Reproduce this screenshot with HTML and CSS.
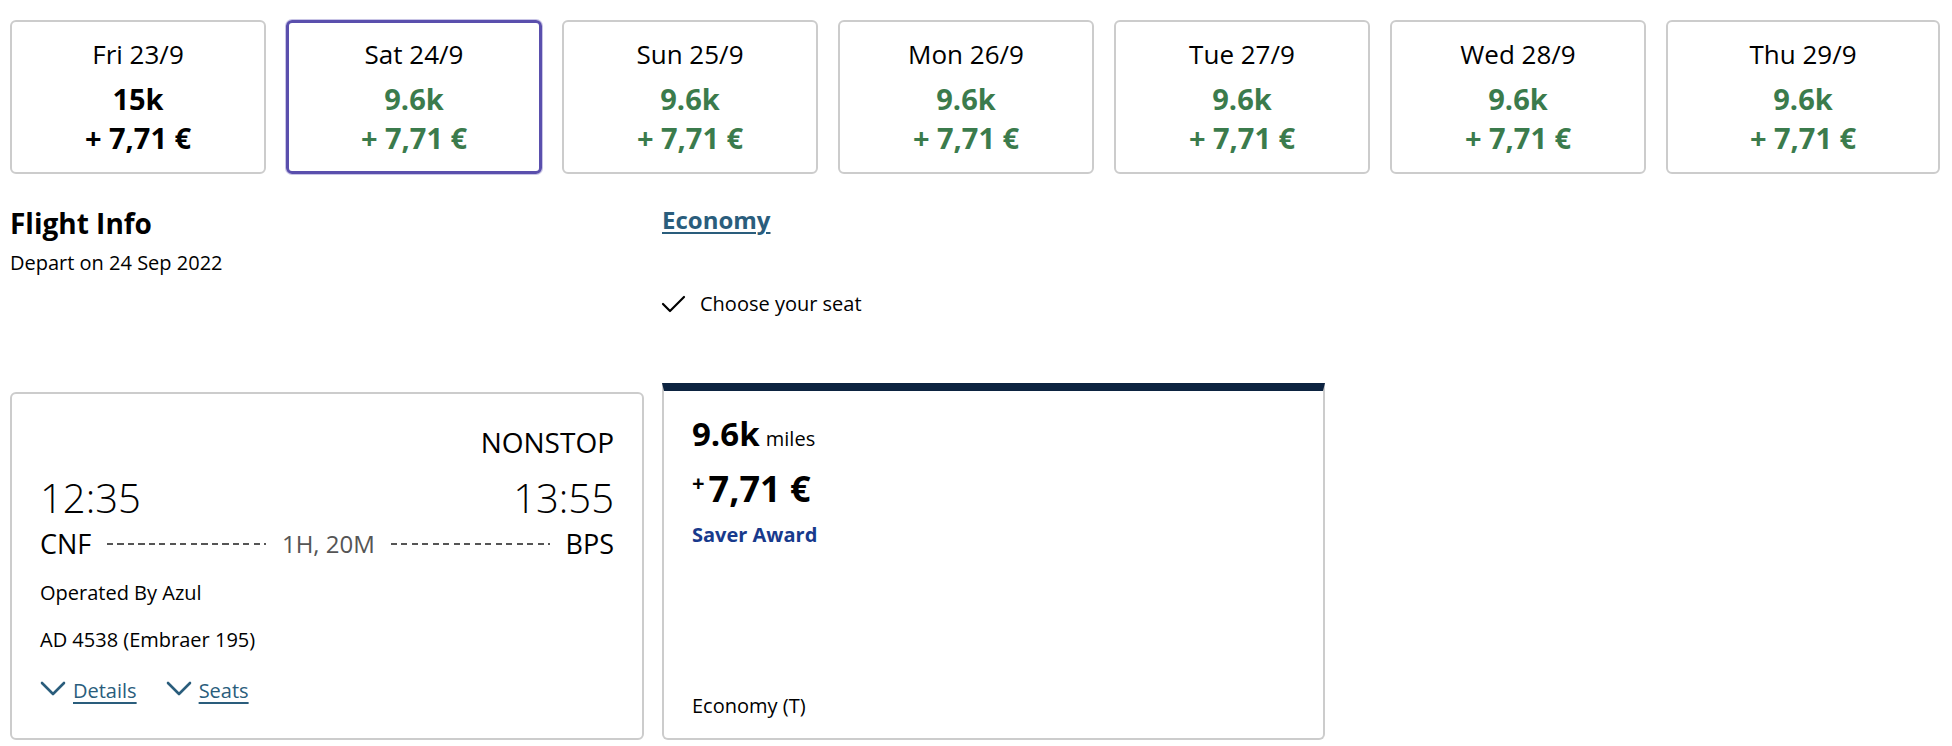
FILE: index.html
```html
<!DOCTYPE html>
<html lang="en">
<head>
<meta charset="utf-8">
<title>Flight selection</title>
<link rel="stylesheet" href="styles.css">
</head>
<body>
<div class="page">
  <div class="dates">
    <div class="date-card">
      <div class="date">Fri 23/9</div>
      <div class="price">15k</div>
      <div class="price">+ 7,71 €</div>
    </div>
    <div class="date-card selected">
      <div class="date">Sat 24/9</div>
      <div class="price green">9.6k</div>
      <div class="price green">+ 7,71 €</div>
    </div>
    <div class="date-card">
      <div class="date">Sun 25/9</div>
      <div class="price green">9.6k</div>
      <div class="price green">+ 7,71 €</div>
    </div>
    <div class="date-card">
      <div class="date">Mon 26/9</div>
      <div class="price green">9.6k</div>
      <div class="price green">+ 7,71 €</div>
    </div>
    <div class="date-card">
      <div class="date">Tue 27/9</div>
      <div class="price green">9.6k</div>
      <div class="price green">+ 7,71 €</div>
    </div>
    <div class="date-card">
      <div class="date">Wed 28/9</div>
      <div class="price green">9.6k</div>
      <div class="price green">+ 7,71 €</div>
    </div>
    <div class="date-card">
      <div class="date">Thu 29/9</div>
      <div class="price green">9.6k</div>
      <div class="price green">+ 7,71 €</div>
    </div>
  </div>

  <div class="main">
    <div class="left-head">
      <h2 class="title">Flight Info</h2>
      <div class="depart">Depart on 24 Sep 2022</div>
    </div>
    <div class="right-head">
      <a class="cabin" href="#">Economy</a>
      <div class="feature">
        <svg class="check" width="26" height="20" viewBox="0 0 26 20"><path d="M2 10 L9 17 L23 3" fill="none" stroke="#000" stroke-width="2.2" stroke-linecap="round" stroke-linejoin="round"/></svg>
        <span>Choose your seat</span>
      </div>
    </div>

    <div class="flight-card">
      <div class="stops">NONSTOP</div>
      <div class="times">
        <span>12:35</span>
        <span>13:55</span>
      </div>
      <div class="route">
        <span class="code">CNF</span>
        <span class="dash"></span>
        <span class="duration">1H, 20M</span>
        <span class="dash"></span>
        <span class="code">BPS</span>
      </div>
      <div class="info">Operated By Azul</div>
      <div class="info second">AD 4538 (Embraer 195)</div>
      <div class="links">
        <a class="toggle" href="#">
          <svg width="26" height="16" viewBox="0 0 26 16"><path d="M2 2 L13 13 L24 2" fill="none" stroke="#2a5d7c" stroke-width="2.6" stroke-linecap="round" stroke-linejoin="round"/></svg>
          <span>Details</span>
        </a>
        <a class="toggle" href="#">
          <svg width="26" height="16" viewBox="0 0 26 16"><path d="M2 2 L13 13 L24 2" fill="none" stroke="#2a5d7c" stroke-width="2.6" stroke-linecap="round" stroke-linejoin="round"/></svg>
          <span>Seats</span>
        </a>
      </div>
    </div>

    <div class="fare-card">
      <div class="miles"><span class="miles-num">9.6k</span> <span class="miles-unit">miles</span></div>
      <div class="tax"><sup class="plus">+</sup>7,71 €</div>
      <div class="award">Saver Award</div>
      <div class="fare-class">Economy (T)</div>
    </div>
  </div>
</div>
</body>
</html>
```
FILE: styles.css
```css
* { box-sizing: border-box; }

html, body {
  margin: 0;
  padding: 0;
  background: #ffffff;
}

body {
  font-family: "Open Sans", "Noto Sans", "Liberation Sans", sans-serif;
  color: #000000;
}

.page {
  padding: 20px 12px 0 10px;
}

.dates {
  display: grid;
  grid-template-columns: repeat(6, 256px) 1fr;
  column-gap: 20px;
}

.date-card {
  height: 154px;
  border: 2px solid #cccccc;
  border-radius: 6px;
  text-align: center;
  padding-top: 15px;
}

.date-card.selected {
  border: 3px solid #5a4fad;
  box-shadow: 0 0 0 1px #c9c5e6;
  padding-top: 14px;
}

.date {
  font-size: 26px;
  line-height: 34px;
  margin-bottom: 8px;
}

.price {
  font-size: 29px;
  font-weight: 700;
  line-height: 39px;
}

.price.green { color: #3b7b4c; }

.main {
  margin-top: 30px;
  display: grid;
  grid-template-columns: 634px 663px;
  column-gap: 18px;
  grid-template-rows: 179px auto;
}

.title {
  margin: 0;
  font-size: 28px;
  font-weight: 700;
  line-height: 38px;
}

.depart {
  margin-top: 8px;
  font-size: 20px;
  line-height: 26px;
}

.cabin {
  display: inline-block;
  font-size: 24px;
  font-weight: 700;
  line-height: 32px;
  color: #2a5d7c;
  text-decoration: underline;
  text-underline-offset: 3px;
  text-decoration-thickness: 2px;
}

.feature {
  margin-top: 55px;
  display: flex;
  align-items: center;
  gap: 13px;
  font-size: 20px;
  line-height: 26px;
}

.check { display: block; margin-left: -1px; }

.flight-card {
  align-self: end;
  height: 348px;
  border: 2px solid #cccccc;
  border-radius: 6px;
  padding: 30px 28px 0;
}

.stops {
  text-align: right;
  font-size: 28px;
  line-height: 36px;
}

.times {
  margin-top: 13px;
  display: flex;
  justify-content: space-between;
  font-size: 40px;
  font-weight: 300;
  line-height: 50px;
}

.route {
  margin-top: 3px;
  display: flex;
  align-items: center;
  gap: 16px;
  font-size: 27px;
  line-height: 36px;
}

.dash {
  flex: 1;
  height: 2px;
  background: repeating-linear-gradient(90deg, #555555 0 6px, transparent 6px 10.5px);
}

.duration {
  font-size: 24px;
  color: #555555;
}

.info {
  margin-top: 17px;
  font-size: 20px;
  line-height: 28px;
}

.info.second { margin-top: 19px; }

.links {
  margin-top: 23px;
  display: flex;
  gap: 29px;
  font-size: 20px;
  line-height: 28px;
}

.toggle {
  display: flex;
  align-items: center;
  gap: 7px;
  color: #2a5d7c;
  text-decoration: none;
}

.toggle span {
  text-decoration: underline;
  text-underline-offset: 4px;
}

.toggle svg { display: block; margin-top: -4px; }

.fare-card {
  align-self: end;
  height: 357px;
  border: 2px solid #cccccc;
  border-top: 8px solid #0c2340;
  border-radius: 0 0 6px 6px;
  padding: 21px 28px 18px;
  display: flex;
  flex-direction: column;
}

.miles { line-height: 44px; }

.miles-num {
  font-size: 33px;
  font-weight: 700;
  margin-right: 2px;
}

.miles-unit { font-size: 20px; }

.tax {
  margin-top: 5px;
  font-size: 36px;
  font-weight: 700;
  line-height: 44px;
}

.plus {
  font-size: 22px;
  vertical-align: 11px;
  line-height: 0;
  margin-right: 4px;
}

.award {
  margin-top: 10px;
  font-size: 20px;
  font-weight: 700;
  line-height: 28px;
  color: #183a8c;
}

.fare-class {
  margin-top: auto;
  font-size: 20px;
  line-height: 28px;
}
```
